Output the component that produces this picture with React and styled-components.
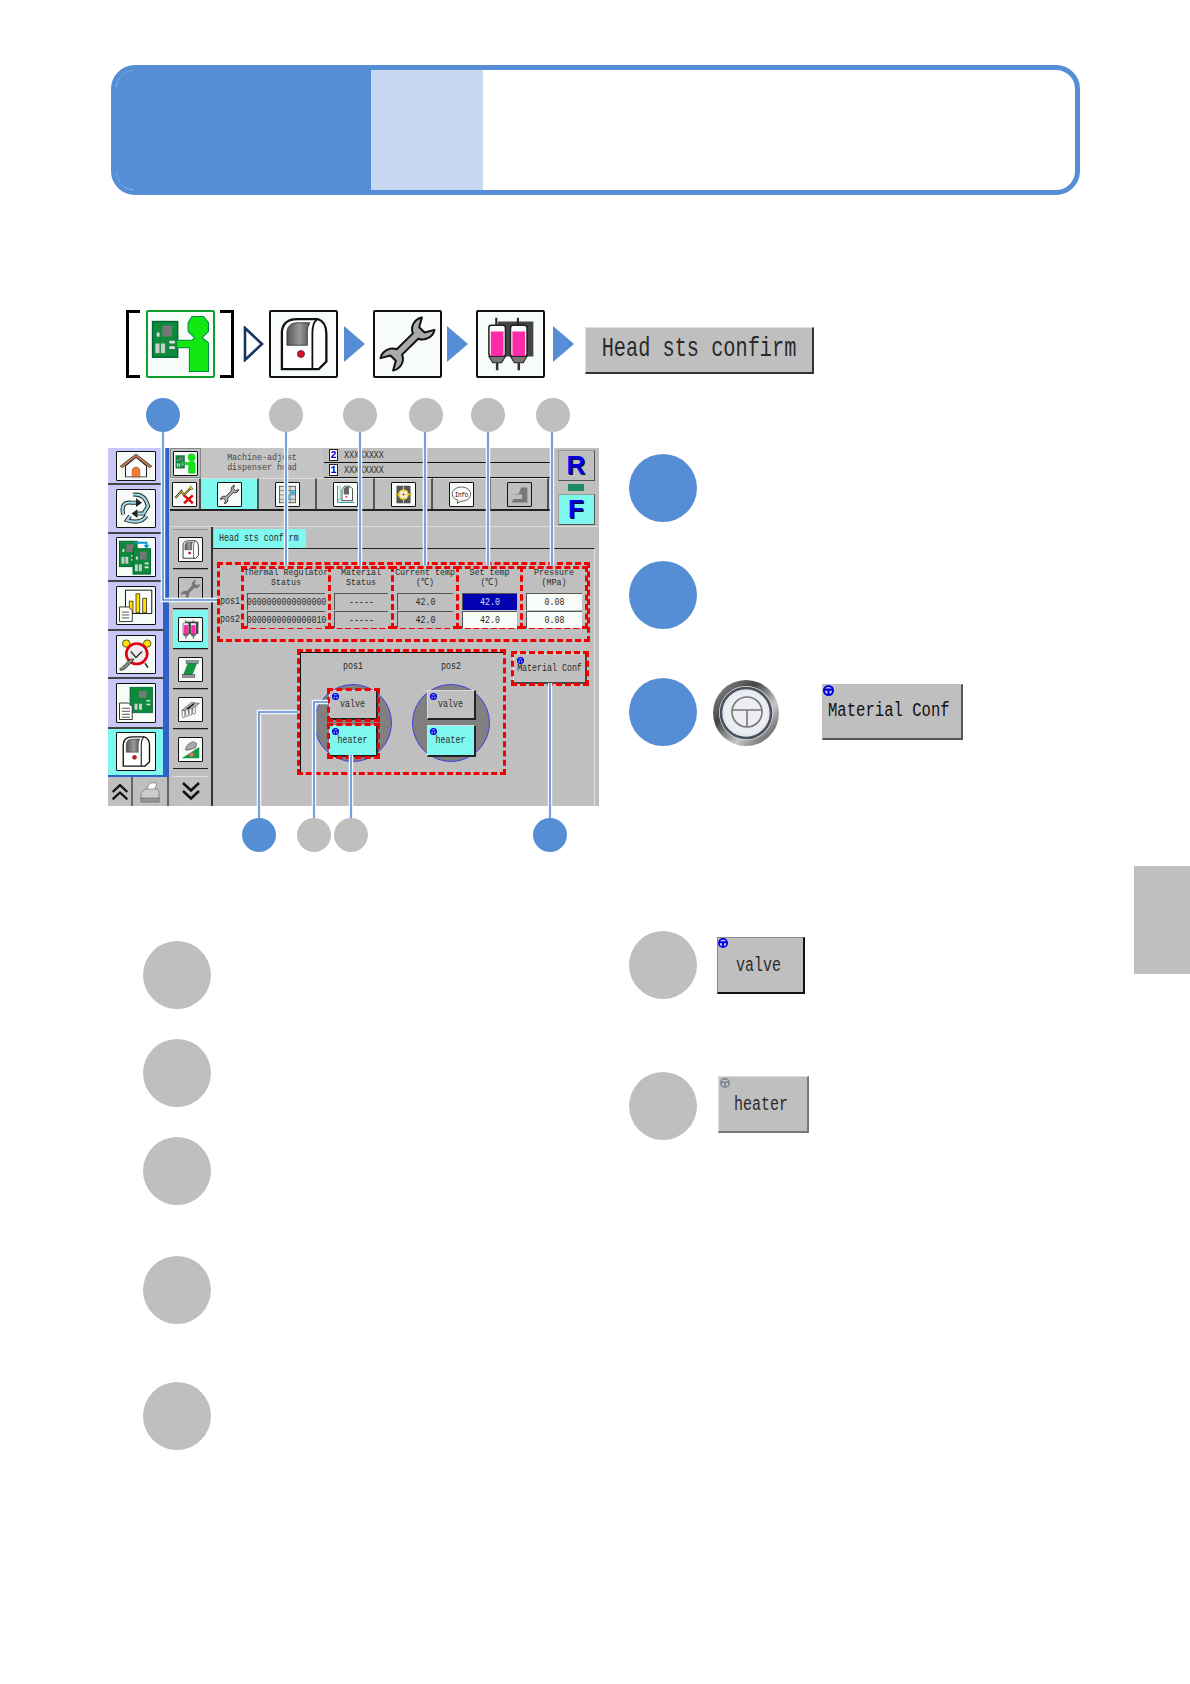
import React from 'react'
import styled, { createGlobalStyle } from 'styled-components'

const BLUE = '#558ed5'
const GRAY = '#bfbfbf'
const CYAN = '#7ff8f0'
const MONO = '"Liberation Mono", monospace'

const GlobalStyle = createGlobalStyle`
  html, body { margin: 0; padding: 0; background: #fff; }
  body { font-family: ${MONO}; }
`

/* ---------- drawings ---------- */

const Svg = ({ children }) => (
  <svg viewBox="0 0 48 48" width="100%" height="100%" preserveAspectRatio="none">{children}</svg>
)

const Chip = ({ x, y, s = 1 }) => (
  <g transform={`translate(${x} ${y}) scale(${s})`}>
    <rect width="18" height="26" fill="#0d8a3c" stroke="#063" />
    <rect x="7" y="3" width="7" height="8" fill="#777" />
    <rect x="2" y="16" width="3" height="7" fill="#ccc" />
    <rect x="6" y="16" width="3" height="7" fill="#ccc" />
    <rect x="12" y="14" width="4" height="2" fill="#ddd" />
    <rect x="12" y="18" width="4" height="2" fill="#ddd" />
    <rect x="3" y="8" width="2" height="3" fill="#ddd" />
  </g>
)

const OperatorIcon = () => (
  <Svg>
    <g transform="translate(2 6)"><Chip x="0" y="0" s="1.1" /></g>
    <path d="M33 2h9l4 5v7l-5 5 5 4v23H31V27H21v-6h12l2-2-5-5V7z" fill="#10e810" stroke="#084" strokeWidth=".8" />
  </Svg>
)

const MachineIcon = () => (
  <Svg>
    <defs>
      <linearGradient id="machineGlass" x1="0" y1="0" x2="1" y2="0">
        <stop offset="0" stopColor="#555" />
        <stop offset=".55" stopColor="#999" />
        <stop offset="1" stopColor="#555" />
      </linearGradient>
    </defs>
    <path d="M7 44V14q1-10 12-10h16q7 2 7 12v22l-6 6z" fill="#fff" stroke="#111" strokeWidth="1.8" />
    <path d="M35 4q-4 3-4 11v29" fill="none" stroke="#111" strokeWidth="1.4" />
    <path d="M11 25V14q1-7 8-7h10q-2 3-2 7v11z" fill="url(#machineGlass)" stroke="#222" strokeWidth=".6" />
    <circle cx="22" cy="32" r="2.8" fill="#e01020" stroke="#333" strokeWidth=".6" />
  </Svg>
)

const WrenchIcon = ({ fill = '#aaa', line = '#111' }) => (
  <Svg>
    <g transform="rotate(-45 24 24)">
      <path
        d="M1 17A9.5 9.5 0 0 1 15 21H33A9.5 9.5 0 0 1 47 17L40 21V27L47 31A9.5 9.5 0 0 1 33 27H15A9.5 9.5 0 0 1 1 31L8 27V21Z"
        fill={fill}
        stroke={line}
        strokeWidth="1.6"
        strokeLinejoin="round"
      />
    </g>
  </Svg>
)

const Syringe = ({ x }) => (
  <g transform={`translate(${x} 0)`}>
    <rect x="5" y="3" width="1.6" height="8" fill="#222" />
    <rect x="0" y="9" width="13" height="25" rx="2" fill="#fff" stroke="#222" strokeWidth="1.2" />
    <rect x="1.5" y="14" width="10" height="20" fill="#ff2aa8" />
    <path d="M0 34h13l-3 5H3z" fill="#777" stroke="#222" strokeWidth=".8" />
    <rect x="5.5" y="39" width="2" height="6" fill="#333" />
  </g>
)

const SyringeIcon = () => (
  <Svg>
    <rect x="14" y="6" width="28" height="28" fill="#444" />
    <Syringe x="7" />
    <Syringe x="24" />
  </Svg>
)

const HomeIcon = () => (
  <Svg>
    <path d="M10 24v20h28V24L24 8z" fill="#fff" stroke="#222" strokeWidth="1.4" />
    <path d="M4 26L24 5l20 21" fill="none" stroke="#222" strokeWidth="5" />
    <path d="M4 26L24 5l20 21" fill="none" stroke="#c97a55" strokeWidth="3" />
    <path d="M19 44V30q5-8 10 0v14z" fill="#f08030" stroke="#a33" />
  </Svg>
)

const CycleIcon = () => (
  <Svg>
    {['M20 5q16-2 20 16l-6 10h-8', 'M38 34q-8 12-26 6l4-6', 'M7 32Q3 14 18 16h10'].map((d) => (
      <g key={d}>
        <path d={d} fill="none" stroke="#222" strokeWidth="5.5" />
        <path d={d} fill="none" stroke="#9fdbe4" strokeWidth="3" />
      </g>
    ))}
    <path d="M24 10l8 6-8 6zM26 25l-8 6 8 6z" fill="#222" />
  </Svg>
)

const BoardsIcon = () => (
  <Svg>
    <Chip x="2" y="3" s="1.3" />
    <path d="M22 5h16v5" fill="none" stroke="#09c" strokeWidth="2.5" />
    <path d="M34 8h8l-4 5z" fill="#09c" />
    <Chip x="20" y="13" s="1.3" />
  </Svg>
)

const ChartIcon = () => (
  <Svg>
    <rect x="10" y="3" width="35" height="32" fill="#fff" stroke="#222" strokeWidth="1.4" />
    <rect x="15" y="18" width="5" height="16" fill="#ffe000" stroke="#222" />
    <rect x="24" y="8" width="5" height="26" fill="#ffe000" stroke="#222" />
    <rect x="33" y="14" width="5" height="20" fill="#ffe000" stroke="#222" />
    <path d="M2 26h12l5 5v15H2z" fill="#fff" stroke="#222" strokeWidth="1.2" />
    <path d="M5 33h10M5 37h10M5 41h10" stroke="#222" />
  </Svg>
)

const AlarmIcon = () => (
  <Svg>
    <circle cx="11" cy="9" r="5" fill="#ffe000" stroke="#222" />
    <circle cx="39" cy="9" r="5" fill="#ffe000" stroke="#222" />
    <path d="M13 36l-4 6M36 36l4 6" stroke="#222" strokeWidth="2" />
    <circle cx="25" cy="23" r="14" fill="#eee" stroke="#e00010" strokeWidth="3.5" />
    <path d="M17 20l7 8 8-8" fill="none" stroke="#333" strokeWidth="2" />
    <path d="M4 46l5-2 10-10 2-4-6 1-2 3-8 8-3 2z" fill="#888" stroke="#222" />
  </Svg>
)

const DocBoardIcon = () => (
  <Svg>
    <rect x="16" y="3" width="30" height="34" fill="#0d8a3c" stroke="#063" />
    <rect x="28" y="8" width="10" height="9" fill="#777" />
    <rect x="22" y="25" width="4" height="8" fill="#ccc" />
    <rect x="28" y="25" width="4" height="8" fill="#ccc" />
    <rect x="38" y="20" width="5" height="2" fill="#ddd" />
    <rect x="38" y="25" width="5" height="2" fill="#ddd" />
    <path d="M2 24h12l5 5v17H2z" fill="#fff" stroke="#222" strokeWidth="1.2" />
    <path d="M5 31h11M5 35h11M5 39h11M5 43h11" stroke="#222" />
  </Svg>
)

const GridIcon = () => (
  <Svg>
    <rect x="6" y="5" width="36" height="38" fill="#ddd" stroke="#222" strokeWidth="1.5" />
    <path d="M6 15h36M6 25h36M6 35h36M19 5v38M30 5v38" stroke="#222" />
    <rect x="31" y="16" width="10" height="8" fill="#38b8d8" />
    <rect x="20" y="26" width="9" height="8" fill="#38b8d8" />
  </Svg>
)

const PlanIcon = () => (
  <Svg>
    <path d="M6 4v38h38" fill="none" stroke="#088" strokeWidth="2" />
    <path d="M12 4v32M6 36h34" stroke="#088" />
    <path d="M16 38V13l6-8h12l6 6v27z" fill="#fff" stroke="#111" strokeWidth="1.6" />
    <path d="M20 24V11l4-4h10l-2 4v13z" fill="#666" />
    <circle cx="26" cy="29" r="2" fill="#e01020" />
  </Svg>
)

const TargetIcon = () => (
  <Svg>
    <rect x="8" y="4" width="32" height="40" fill="#555" />
    <circle cx="24" cy="24" r="11" fill="#f4f0d8" stroke="#e8d000" strokeWidth="2.5" />
    <path d="M24 5v12M24 31v12M5 24h12M31 24h12" stroke="#e8d000" strokeWidth="2.5" />
    <circle cx="24" cy="24" r="2.5" fill="#d02020" />
  </Svg>
)

const InfoIcon = () => (
  <Svg>
    <path d="M24 7c12 0 21 7 21 16s-9 16-21 16l-10 5 2-7C8 35 3 30 3 23 3 14 12 7 24 7z" fill="#fff" stroke="#222" strokeWidth="1.6" />
    <text x="24" y="29" textAnchor="middle" fontFamily={MONO} fontSize="15" textLength="32" fill="#222">Info</text>
  </Svg>
)

const DisabledIcon = () => (
  <Svg>
    <path d="M6 24l16-2 6-14h14v34H6l4-8h20V24z" fill="#777" />
  </Svg>
)

const BackIcon = () => (
  <Svg>
    <path d="M3 32l14-16 5 9 18-17" fill="none" stroke="#222" strokeWidth="4.5" />
    <path d="M3 32l14-16 5 9 18-17" fill="none" stroke="#f4e020" strokeWidth="2.2" />
    <path d="M38 4l6 8-10 0z" fill="#f4e020" stroke="#222" />
    <path d="M23 26l20 18M43 26L23 44" stroke="#e01010" strokeWidth="6" />
  </Svg>
)

const TapeIcon = () => (
  <Svg>
    <rect x="14" y="4" width="28" height="6" fill="#999" stroke="#222" />
    <path d="M18 10h20l-10 26H8z" fill="#139a40" stroke="#063" />
    <rect x="6" y="36" width="28" height="6" fill="#999" stroke="#222" />
  </Svg>
)

const CombIcon = () => (
  <Svg>
    <path d="M4 26L26 8l18 2-20 18z" fill="#bbb" stroke="#222" strokeWidth="1.2" />
    <path d="M14 22l16-12 4 1-16 13z" fill="#111" />
    {[5, 13, 21, 29].map((x) => (
      <rect key={x} x={x} y={28 - x / 3} width="6" height="16" rx="2" fill="#fff" stroke="#222" strokeWidth="1.2" />
    ))}
  </Svg>
)

const IronIcon = () => (
  <Svg>
    <path d="M4 44L44 18v26z" fill="#139a40" />
    <path d="M12 24q4-14 18-18l8 4-2 10-20 6z" fill="#aaa" stroke="#222" strokeWidth="1.2" />
    <circle cx="26" cy="36" r="5" fill="#f07070" />
  </Svg>
)

const ChevronsIcon = () => (
  <Svg>
    <path d="M8 8l16 15L40 8M8 24l16 15 16-15" fill="none" stroke="#111" strokeWidth="5" />
  </Svg>
)

const PrinterIcon = () => (
  <Svg>
    <path d="M16 22L24 6h14l-6 16z" fill="#fff" stroke="#555" />
    <path d="M6 26l8-8h26l2 8v12H6z" fill="#ccc" stroke="#555" />
    <rect x="6" y="36" width="36" height="8" fill="#999" stroke="#444" />
  </Svg>
)

const WheelMark = ({ color = '#0000e0' }) => (
  <svg viewBox="0 0 10 10" width="100%" height="100%">
    <circle cx="5" cy="5" r="5" fill={color} />
    <circle cx="5" cy="5" r="3.2" fill="#bfd0ff" />
    <path d="M1 4.2h8M5 4.2V9" stroke={color} strokeWidth="2" />
  </svg>
)

const KnobIcon = () => (
  <svg viewBox="0 0 66 66" width="66" height="66">
    <defs>
      <linearGradient id="knobRing" x1="0" y1="0" x2="1" y2="1">
        <stop offset="0" stopColor="#9a9a9a" />
        <stop offset=".35" stopColor="#444" />
        <stop offset=".65" stopColor="#c8c8c8" />
        <stop offset="1" stopColor="#333" />
      </linearGradient>
    </defs>
    <circle cx="33" cy="33" r="33" fill="url(#knobRing)" />
    <circle cx="33" cy="33" r="27" fill="#e4e7ee" />
    <circle cx="33" cy="33" r="25" fill="none" stroke="#4a4f5c" strokeWidth="2.6" />
    <circle cx="33" cy="33" r="21.5" fill="#eceef3" />
    <circle cx="34" cy="32" r="15" fill="none" stroke="#777" strokeWidth="1.6" />
    <path d="M19 30h30M34 30v17" stroke="#777" strokeWidth="1.6" />
  </svg>
)

/* ---------- page ---------- */

const Page = styled.div`
  position: relative;
  width: 1190px;
  height: 1684px;
  padding-top: 65px;
  box-sizing: border-box;
  overflow: hidden;
`

const Banner = styled.div`
  display: flex;
  box-sizing: border-box;
  width: 969px;
  height: 130px;
  margin-left: 111px;
  border: 5px solid ${BLUE};
  border-radius: 24px;
  overflow: hidden;
`

const BannerLead = styled.div`
  width: 255px;
  background: ${BLUE};
`

const BannerStep = styled.div`
  width: 112px;
  background: #c6d9f1;
`

const SideTab = styled.div`
  position: absolute;
  right: 0;
  top: 866px;
  width: 56px;
  height: 108px;
  background: ${GRAY};
`

const Crumbs = styled.div`
  display: flex;
  align-items: center;
  height: 68px;
  margin-top: 115px;
  padding-left: 126px;
`

const Bracket = styled.div`
  width: 14px;
  height: 68px;
  box-sizing: border-box;
  border: solid #000;
  border-width: 3px 0 3px 3px;
  transform: ${(p) => (p.$right ? 'scaleX(-1)' : 'none')};
  margin: ${(p) => (p.$right ? '0 0 0 5px' : '0 6px 0 0')};
`

const CrumbIcon = styled.div`
  width: 69px;
  height: 68px;
  box-sizing: border-box;
  padding: 2px;
  border: 2px solid ${(p) => p.$line || '#111'};
  border-radius: 2px;
  background: #f8fcf8;
`

const Arrow = styled.div`
  width: 21px;
  height: 36px;
  margin: 0 ${(p) => p.$after}px 0 ${(p) => p.$before}px;
  background: ${(p) => (p.$hollow ? 'none' : BLUE)};
  clip-path: ${(p) => (p.$hollow ? 'none' : 'polygon(0 0, 100% 50%, 0 100%)')};
`

const HollowArrow = () => (
  <svg viewBox="0 0 21 36" width="100%" height="100%">
    <path d="M2 2l17 16L2 34z" fill="none" stroke="#17375e" strokeWidth="2.6" />
  </svg>
)

const RaisedButton = styled.div`
  position: relative;
  display: flex;
  flex: none;
  align-items: center;
  justify-content: ${(p) => p.$justify || 'center'};
  box-sizing: border-box;
  width: ${(p) => p.$w}px;
  height: ${(p) => p.$h}px;
  padding: ${(p) => p.$pt || 0}px ${(p) => p.$pr || 0}px 0 ${(p) => p.$pad || 0}px;
  margin: ${(p) => p.$mt || 0}px 0 ${(p) => p.$mb || 0}px ${(p) => p.$ml || 0}px;
  background: ${(p) => (p.$on ? CYAN : GRAY)};
  border: solid;
  border-width: 1px 2px 2px 1px;
  border-color: ${(p) => p.$top || '#e8e8e8'} ${(p) => p.$edge || '#333'} ${(p) => p.$edge || '#333'} ${(p) => p.$top || '#e8e8e8'};
  outline: ${(p) => (p.$marked ? '3px dashed #f00000' : 'none')};
  outline-offset: ${(p) => (p.$marked ? '-1px' : '0')};
  color: #222;
`

const Tall = styled.span`
  display: inline-block;
  font-family: ${MONO};
  font-size: ${(p) => p.$size}px;
  line-height: 1;
  white-space: pre;
  color: ${(p) => p.$color || '#2a2a2a'};
  transform: scaleY(${(p) => p.$stretch || 1.3});
`

const WheelSpot = styled.span`
  position: absolute;
  left: ${(p) => p.$at}px;
  top: ${(p) => p.$at}px;
  width: ${(p) => p.$size}px;
  height: ${(p) => p.$size}px;
  line-height: 0;
`

const Stage = styled.div`
  display: flex;
  margin-top: 20px;
  padding-left: 108px;
`

const Figure = styled.div`
  position: relative;
  width: 491px;
  margin-right: 30px;
`

const Leaders = styled.svg`
  position: absolute;
  left: 0;
  top: 0;
  pointer-events: none;
`

const CalloutRow = styled.div`
  display: flex;
  height: 34px;
  padding-left: ${(p) => p.$pad}px;
  margin: ${(p) => (p.$bottom ? '12px 0 0' : '0 0 16px')};
`

const Small = styled.div`
  width: 34px;
  height: 34px;
  margin-left: ${(p) => p.$gap || 0}px;
  border-radius: 50%;
  background: ${(p) => (p.$blue ? BLUE : GRAY)};
`

const Big = styled.div`
  flex: none;
  width: 68px;
  height: 68px;
  border-radius: 50%;
  background: ${(p) => (p.$blue ? BLUE : GRAY)};
`

/* ---------- machine screen ---------- */

const Screen = styled.div`
  display: flex;
  width: 491px;
  height: 358px;
  background: ${GRAY};
`

const NavColumn = styled.div`
  display: flex;
  flex-direction: column;
  width: 62px;
`

const NavList = styled.div`
  box-sizing: border-box;
  height: 329px;
  border-right: 6px solid #2f62c4;
  border-bottom: 2px solid #2f62c4;
  margin-right: 1px;
`

const NavItem = styled.div`
  display: flex;
  align-items: center;
  justify-content: center;
  box-sizing: border-box;
  height: ${(p) => p.$h}px;
  background: ${(p) => (p.$on ? CYAN : '#c8c8f8')};
  border-bottom: 2px solid ${(p) => (p.$on ? CYAN : '#444')};
`

const Tile = styled.div`
  box-sizing: border-box;
  width: ${(p) => p.$w || 25}px;
  height: ${(p) => p.$h || 25}px;
  padding: 1px;
  border: 1px solid #111;
  border-radius: 1px;
  background: ${(p) => (p.$dim ? GRAY : '#f8fcf8')};
`

const NavFoot = styled.div`
  display: flex;
  flex: 1;
`

const FootCell = styled.div`
  display: flex;
  align-items: center;
  justify-content: center;
  box-sizing: border-box;
  width: ${(p) => p.$w}px;
  border-right: 2px solid #666;
`

const Glyph = styled.span`
  display: block;
  width: ${(p) => p.$s}px;
  height: ${(p) => p.$s}px;
  transform: ${(p) => (p.$up ? 'scaleY(-1)' : 'none')};
`

const Work = styled.div`
  display: flex;
  flex: 1;
  flex-direction: column;
  min-width: 0;
`

const TopArea = styled.div`
  display: flex;
  height: 79px;
`

const TopLeft = styled.div`
  width: 383px;
`

const TopBar = styled.div`
  display: flex;
  height: 30px;
`

const ThumbCell = styled.div`
  display: flex;
  align-items: center;
  justify-content: center;
  box-sizing: border-box;
  width: 31px;
  border: 1px solid #888;
`

const TitleCell = styled.div`
  display: flex;
  flex-direction: column;
  align-items: center;
  justify-content: center;
  gap: 1px;
  width: 122px;
  background: #c4c4c4;
`

const StatusStack = styled.div`
  flex: 1;
  margin-left: 1px;
`

const StatusRow = styled.div`
  display: flex;
  align-items: center;
  gap: 6px;
  box-sizing: border-box;
  height: 15px;
  padding-left: 5px;
  border-bottom: 1px solid #111;
`

const SlotNo = styled.span`
  display: flex;
  align-items: center;
  justify-content: center;
  box-sizing: border-box;
  width: 9px;
  height: 12px;
  background: #fff;
  border: 1px solid #222;
  font-size: 10px;
  font-weight: bold;
  color: #0000d8;
`

const TabBar = styled.div`
  display: flex;
  height: 31px;
  border-bottom: 2px solid #222;
  box-sizing: content-box;
`

const TabCell = styled.div`
  display: flex;
  align-items: center;
  justify-content: center;
  box-sizing: border-box;
  width: ${(p) => p.$w || 58}px;
  background: ${(p) => (p.$on ? CYAN : GRAY)};
  border-right: 2px solid #555;
  border-top: 1px solid #ddd;
`

const RightKeys = styled.div`
  display: flex;
  flex-direction: column;
  align-items: center;
  flex: 1;
  padding-top: 2px;
`

const KeyCap = styled.div`
  display: flex;
  align-items: center;
  justify-content: center;
  box-sizing: border-box;
  width: 37px;
  height: 31px;
  border: 1px solid #999;
  border-right-color: #555;
  border-bottom-color: #555;
  background: ${(p) => (p.$on ? CYAN : GRAY)};
  font-family: "Liberation Sans", sans-serif;
  font-size: 26px;
  font-weight: bold;
  color: #0000e0;
  text-shadow: 1px 1px 0 #111;
`

const KeyChip = styled.div`
  width: 16px;
  height: 7px;
  margin: 3px 0;
  background: #188c5c;
`

const Lower = styled.div`
  display: flex;
  flex: 1;
  border-top: 1px solid #ddd;
`

const SideColumn = styled.div`
  box-sizing: border-box;
  width: 43px;
  padding: 2px 3px 0;
  border-right: 2px solid #333;
`

const SideItem = styled.div`
  display: flex;
  align-items: center;
  justify-content: center;
  box-sizing: border-box;
  height: ${(p) => p.$h || 40}px;
  margin-top: ${(p) => p.$mt || 0}px;
  background: ${(p) => (p.$on ? CYAN : GRAY)};
  border-bottom: 1px solid ${(p) => (p.$flat ? GRAY : '#222')};
  border-top: 1px solid ${(p) => (p.$flat ? '#ddd' : '#999')};
`

const Panel = styled.div`
  flex: 1;
  min-width: 0;
`

const PanelTab = styled.div`
  display: flex;
  align-items: center;
  box-sizing: border-box;
  width: 92px;
  height: 19px;
  margin: 2px 0 0 1px;
  padding-left: 5px;
  background: ${CYAN};
`

const PanelBody = styled.div`
  box-sizing: border-box;
  height: 258px;
  margin-right: 4px;
  padding: 13px 0 0 4px;
  border-top: 1px solid #222;
  border-right: 1px solid #e6e6e6;
`

const DashedTable = styled.div`
  display: flex;
  box-sizing: border-box;
  width: 373px;
  height: 80px;
  border: 3px dashed #f00000;
  padding-top: 1px;
`

const RowLabels = styled.div`
  display: flex;
  flex-direction: column;
  width: 21px;
  padding-top: 31px;
  gap: 10px;
`

const TableCol = styled.div`
  box-sizing: border-box;
  width: ${(p) => p.$w}px;
  height: 63px;
  margin-right: -3px;
  padding: 0 3px;
  border: 3px dashed #f00000;
  text-align: center;
`

const ColHead = styled.div`
  display: flex;
  flex-direction: column;
  align-items: center;
  justify-content: center;
  gap: 1px;
  box-sizing: border-box;
  height: 24px;
  padding-bottom: 6px;
`

const Cell = styled.div`
  display: flex;
  align-items: center;
  justify-content: center;
  box-sizing: border-box;
  height: 17px;
  margin-bottom: 1px;
  background: ${(p) => (p.$tone === 'blue' ? '#0000b0' : p.$tone === 'white' ? '#f8fcf8' : GRAY)};
  border-top: 1px solid #555;
  border-left: 1px solid #555;
`

const LowerRow = styled.div`
  display: flex;
  align-items: flex-start;
  margin: 7px 0 0 80px;
`

const TankBox = styled.div`
  display: flex;
  box-sizing: border-box;
  width: 209px;
  height: 126px;
  padding: 0 0 0 4px;
  border: 3px dashed #f00000;
  box-shadow: inset 1px 1px 0 #111;
`

const TankCol = styled.div`
  display: flex;
  flex-direction: column;
  align-items: center;
  width: 98px;
`

const TankName = styled.div`
  height: 32px;
  line-height: 24px;
  box-sizing: border-box;
`

const Disc = styled.div`
  display: flex;
  flex-direction: column;
  align-items: center;
  gap: 5px;
  box-sizing: border-box;
  width: 78px;
  height: 78px;
  padding-top: 5px;
  border: 1px solid #4040e0;
  border-radius: 50%;
  background: #808080;
`

/* ---------- notes beside the figure ---------- */

const Notes = styled.div`
  display: flex;
  flex-direction: column;
  padding-top: 56px;
`

const NoteRow = styled.div`
  display: flex;
  align-items: center;
  margin-top: ${(p) => p.$mt || 0}px;
`

const KnobSpot = styled.div`
  width: 66px;
  height: 66px;
  margin: 2px 0 0 16px;
`

const Lists = styled.div`
  display: flex;
  margin-top: 79px;
  padding-left: 143px;
`

const LeftList = styled.div`
  display: flex;
  flex-direction: column;
  width: 486px;
  padding-top: 10px;
`

const RightList = styled.div`
  display: flex;
  flex-direction: column;
`

const ListGap = styled.div`
  height: ${(p) => p.$h}px;
`

/* ---------- data ---------- */

const navItems = [
  { h: 37, icon: <HomeIcon />, th: 30 },
  { h: 49, icon: <CycleIcon />, th: 39 },
  { h: 48, icon: <BoardsIcon />, th: 40 },
  { h: 49, icon: <ChartIcon />, th: 39 },
  { h: 48, icon: <AlarmIcon />, th: 39 },
  { h: 50, icon: <DocBoardIcon />, th: 40 },
  { h: 46, icon: <MachineIcon />, th: 39, on: true },
]

const tabs = [
  { icon: <WrenchIcon />, on: true },
  { icon: <GridIcon /> },
  { icon: <PlanIcon /> },
  { icon: <TargetIcon /> },
  { icon: <InfoIcon /> },
  { icon: <DisabledIcon />, dim: true },
]

const sideItems = [
  { icon: <MachineIcon /> },
  { icon: <WrenchIcon fill="#777" line="#777" />, dim: true },
  { icon: <SyringeIcon />, on: true },
  { icon: <TapeIcon /> },
  { icon: <CombIcon /> },
  { icon: <IronIcon /> },
]

const columns = [
  { w: 90, head: ['Thermal Regulator', 'Status'], cells: ['0000000000000000', '0000000000000010'] },
  { w: 66, head: ['Material', 'Status'], cells: ['-----', '-----'] },
  { w: 68, head: ['Current temp', '(℃)'], cells: ['42.0', '42.0'] },
  { w: 67, head: ['Set temp', '(℃)'], cells: ['42.0', '42.0'], tones: ['blue', 'white'] },
  { w: 68, head: ['Pressure', '(MPa)'], cells: ['0.08', '0.08'], tones: ['white', 'white'] },
]

const leaders = [
  '163,432 163,600 217,600',
  '286,432 286,565',
  '360,432 360,565',
  '425,432 425,565',
  '488,432 488,565',
  '552,432 552,565',
  '259,818 259,712 297,712',
  '314,818 314,702 328,702',
  '351,818 351,755',
  '550,818 550,683',
]

function TankButton({ label, on, marked }) {
  return (
    <RaisedButton $w={49} $h={on ? 32 : 30} $on={on} $marked={marked} $top="#ddd" $edge="#222">
      <WheelSpot $at={2} $size={7}><WheelMark /></WheelSpot>
      <Tall $size={8.3}>{label}</Tall>
    </RaisedButton>
  )
}

function App() {
  return (
    <Page>
      <GlobalStyle />
      <Banner>
        <BannerLead />
        <BannerStep />
      </Banner>
      <SideTab />

      <Crumbs>
        <Bracket />
        <CrumbIcon $line="#10a030"><OperatorIcon /></CrumbIcon>
        <Bracket $right />
        <Arrow $hollow $before={9} $after={5}><HollowArrow /></Arrow>
        <CrumbIcon><MachineIcon /></CrumbIcon>
        <Arrow $before={6} $after={8} />
        <CrumbIcon><WrenchIcon /></CrumbIcon>
        <Arrow $before={5} $after={8} />
        <CrumbIcon><SyringeIcon /></CrumbIcon>
        <Arrow $before={8} $after={11} />
        <RaisedButton $w={229} $h={47} $mt={12} $top="#e0e0e0">
          <Tall $size={20.3} $stretch={1.4}>Head sts confirm</Tall>
        </RaisedButton>
      </Crumbs>

      <Stage>
        <Figure>
          <CalloutRow $pad={38}>
            <Small $blue />
            <Small $gap={89} />
            <Small $gap={40} />
            <Small $gap={32} />
            <Small $gap={28} />
            <Small $gap={31} />
          </CalloutRow>

          <Screen>
            <NavColumn>
              <NavList>
                {navItems.map((item, i) => (
                  <NavItem key={i} $h={item.h} $on={item.on}>
                    <Tile $w={40} $h={item.th}>{item.icon}</Tile>
                  </NavItem>
                ))}
              </NavList>
              <NavFoot>
                <FootCell $w={25}><Glyph $s={22} $up><ChevronsIcon /></Glyph></FootCell>
                <FootCell $w={36}><Glyph $s={24}><PrinterIcon /></Glyph></FootCell>
              </NavFoot>
            </NavColumn>

            <Work>
              <TopArea>
                <TopLeft>
                  <TopBar>
                    <ThumbCell><Tile $h={25} $w={25}><OperatorIcon /></Tile></ThumbCell>
                    <TitleCell>
                      <Tall $size={8.3} $stretch={1.2} $color="#444">Machine-adjust</Tall>
                      <Tall $size={8.3} $stretch={1.2} $color="#444">dispenser head</Tall>
                    </TitleCell>
                    <StatusStack>
                      <StatusRow><SlotNo>2</SlotNo><Tall $size={8.3}>XXXXXXXX</Tall></StatusRow>
                      <StatusRow><SlotNo>1</SlotNo><Tall $size={8.3}>XXXXXXXX</Tall></StatusRow>
                    </StatusStack>
                  </TopBar>
                  <TabBar>
                    <TabCell $w={31}><Tile><BackIcon /></Tile></TabCell>
                    {tabs.map((tab, i) => (
                      <TabCell key={i} $on={tab.on}>
                        <Tile $dim={tab.dim}>{tab.icon}</Tile>
                      </TabCell>
                    ))}
                  </TabBar>
                </TopLeft>
                <RightKeys>
                  <KeyCap>R</KeyCap>
                  <KeyChip />
                  <KeyCap $on>F</KeyCap>
                </RightKeys>
              </TopArea>

              <Lower>
                <SideColumn>
                  {sideItems.map((item, i) => (
                    <SideItem key={i} $on={item.on}>
                      <Tile $dim={item.dim}>{item.icon}</Tile>
                    </SideItem>
                  ))}
                  <SideItem $h={29} $mt={7} $flat><Glyph $s={24}><ChevronsIcon /></Glyph></SideItem>
                </SideColumn>

                <Panel>
                  <PanelTab><Tall $size={8.3}>Head sts confirm</Tall></PanelTab>
                  <PanelBody>
                    <DashedTable>
                      <RowLabels>
                        <Tall $size={8.3}>pos1</Tall>
                        <Tall $size={8.3}>pos2</Tall>
                      </RowLabels>
                      {columns.map((col) => (
                        <TableCol key={col.head[0]} $w={col.w}>
                          <ColHead>
                            {col.head.map((line) => <Tall key={line} $size={8.3} $stretch={1.15}>{line}</Tall>)}
                          </ColHead>
                          {col.cells.map((value, i) => (
                            <Cell key={i} $tone={col.tones && col.tones[i]}>
                              <Tall $size={8.3} $color={col.tones && col.tones[i] === 'blue' ? '#d8e0ff' : undefined}>{value}</Tall>
                            </Cell>
                          ))}
                        </TableCol>
                      ))}
                    </DashedTable>

                    <LowerRow>
                      <TankBox>
                        <TankCol>
                          <TankName><Tall $size={8.3}>pos1</Tall></TankName>
                          <Disc>
                            <TankButton label="valve" marked />
                            <TankButton label="heater" on marked />
                          </Disc>
                        </TankCol>
                        <TankCol>
                          <TankName><Tall $size={8.3}>pos2</Tall></TankName>
                          <Disc>
                            <TankButton label="valve" />
                            <TankButton label="heater" on />
                          </Disc>
                        </TankCol>
                      </TankBox>
                      <RaisedButton $w={74} $h={31} $ml={7} $mt={4} $marked $edge="#444">
                        <WheelSpot $at={3} $size={7}><WheelMark /></WheelSpot>
                        <Tall $size={8.3}>Material Conf</Tall>
                      </RaisedButton>
                    </LowerRow>
                  </PanelBody>
                </Panel>
              </Lower>
            </Work>
          </Screen>

          <CalloutRow $pad={134} $bottom>
            <Small $blue />
            <Small $gap={21} />
            <Small $gap={3} />
            <Small $blue $gap={165} />
          </CalloutRow>

          <Leaders width="491" height="454" viewBox="108 398 491 454">
            {leaders.map((points) => (
              <g key={points} fill="none">
                <polyline points={points} stroke="#f4f6fb" strokeWidth="4.5" />
                <polyline points={points} stroke={BLUE} strokeWidth="1.6" />
              </g>
            ))}
          </Leaders>
        </Figure>

        <Notes>
          <Big $blue />
          <NoteRow $mt={39}><Big $blue /></NoteRow>
          <NoteRow $mt={49}>
            <Big $blue />
            <KnobSpot><KnobIcon /></KnobSpot>
            <RaisedButton $w={141} $h={56} $ml={43} $justify="flex-start" $pad={5} $top={GRAY} $edge="#555">
              <WheelSpot $at={0} $size={11}><WheelMark /></WheelSpot>
              <Tall $size={15.6} $stretch={1.35} $color="#111">Material Conf</Tall>
            </RaisedButton>
          </NoteRow>
        </Notes>
      </Stage>

      <Lists>
        <LeftList>
          <Big />
          <ListGap $h={30} />
          <Big />
          <ListGap $h={30} />
          <Big />
          <ListGap $h={51} />
          <Big />
          <ListGap $h={58} />
          <Big />
        </LeftList>
        <RightList>
          <NoteRow>
            <Big />
            <RaisedButton $w={88} $h={57} $ml={20} $pt={3} $pr={4} $top="#888" $edge="#111">
              <WheelSpot $at={0} $size={10}><WheelMark /></WheelSpot>
              <Tall $size={15} $stretch={1.3}>valve</Tall>
            </RaisedButton>
          </NoteRow>
          <NoteRow $mt={73}>
            <Big />
            <RaisedButton $w={91} $h={57} $ml={21} $mb={4} $pt={3} $pr={4} $top="#ddd" $edge="#777">
              <WheelSpot $at={1} $size={10}><WheelMark color="#888" /></WheelSpot>
              <Tall $size={15} $stretch={1.3}>heater</Tall>
            </RaisedButton>
          </NoteRow>
        </RightList>
      </Lists>
    </Page>
  )
}

export default App
